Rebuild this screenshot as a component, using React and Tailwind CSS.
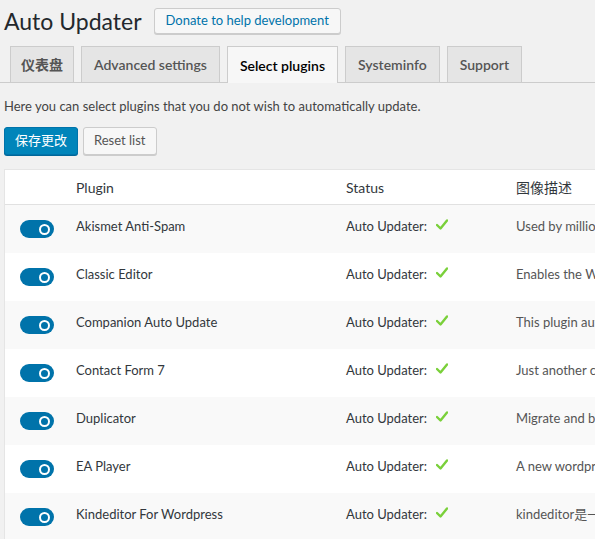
import React from 'react';

const font = { fontFamily: 'Lato, "Noto Sans CJK SC", sans-serif' };

const plugins = [
  ['Akismet Anti-Spam', 'Used by millions, Akismet is quite possibly the best way in the world to protect your blog from spam.'],
  ['Classic Editor', 'Enables the WordPress classic editor and the old-style Edit Post screen.'],
  ['Companion Auto Update', 'This plugin auto updates all plugins, all themes and the wordpress core.'],
  ['Contact Form 7', 'Just another contact form plugin. Simple but flexible.'],
  ['Duplicator', 'Migrate and backup a copy of your WordPress files and database.'],
  ['EA Player', 'A new wordpress music player plugin.'],
  ['Kindeditor For Wordpress', 'kindeditor是一款国产在线HTML编辑器。'],
];

const tabs = ['仪表盘', 'Advanced settings', 'Select plugins', 'Systeminfo', 'Support'];

const Toggle = () => (
  <div className="w-[34px] h-[18px] rounded-full bg-[#0073aa] flex items-center justify-end pr-[4px]">
    <div className="w-[11px] h-[11px] rounded-full border-2 border-white" />
  </div>
);

const Check = () => (
  <svg width="12" height="11" viewBox="0 0 12 11" className="ml-[9px]">
    <path d="M1 6 L4.5 9.5 L11 1.5" fill="none" stroke="#7ad03a" strokeWidth="2.4" strokeLinecap="round" strokeLinejoin="round" />
  </svg>
);

const App = () => {
  return (
    <div className="w-[595px] h-[539px] overflow-hidden bg-[#f1f1f1] text-[#32373c]" style={font}>
      <div className="flex items-center pl-[4px] pt-[7px] h-[34px]">
        <h1 className="text-[23px] leading-[26px] text-[#23282d] font-normal">Auto Updater</h1>
        <button className="ml-[12px] h-[26px] px-[11px] text-[13px] text-[#0073aa] bg-[#f7f7f7] border border-[#cccccc] rounded-[3px] shadow-[0_1px_0_#cccccc]">
          Donate to help development
        </button>
      </div>

      <div className="mt-[12px] flex items-end border-b border-[#cccccc] h-[37px] pl-[10px] gap-[7px] whitespace-nowrap">
        {tabs.map((t, i) => {
          const active = t === 'Select plugins';
          const pad = i === 0 ? 'px-[10px]' : 'px-[12px]';
          return (
            <div
              key={t}
              className={
                active
                  ? `h-[37px] ${pad} flex items-center text-[14px] font-semibold text-black bg-[#f7f7f7] border border-b-0 border-[#cccccc] -mb-px`
                  : `h-[36px] ${pad} flex items-center text-[14px] font-semibold text-[#555555] bg-[#e5e5e5] border border-b-0 border-[#cccccc]`
              }
            >
              {t}
            </div>
          );
        })}
      </div>

      <p className="pl-[4px] mt-[14px] text-[13px] leading-[18px] text-[#444444]">
        Here you can select plugins that you do not wish to automatically update.
      </p>

      <div className="flex gap-[5px] pl-[4px] mt-[12px]">
        <button className="h-[28px] px-[10px] text-[13px] text-white bg-[#0085ba] border border-[#0073aa] rounded-[3px] shadow-[0_1px_0_#006799]">
          保存更改
        </button>
        <button className="h-[28px] px-[10px] text-[13px] text-[#555555] bg-[#f7f7f7] border border-[#cccccc] rounded-[3px] shadow-[0_1px_0_#cccccc]">
          Reset list
        </button>
      </div>

      <div className="ml-[4px] mt-[14px] w-[900px] bg-white border border-[#e5e5e5] whitespace-nowrap">
        <div className="flex h-[35px] items-center border-b border-[#e1e1e1] text-[14px] text-[#32373c]">
          <div className="w-[71px] shrink-0" />
          <div className="w-[270px] shrink-0">Plugin</div>
          <div className="w-[170px] shrink-0">Status</div>
          <div>图像描述</div>
        </div>
        {plugins.map(([name, desc], i) => (
          <div key={name} className={`flex h-[48px] pt-[12px] text-[13px] ${i % 2 === 0 ? 'bg-[#f9f9f9]' : 'bg-white'}`}>
            <div className="w-[71px] shrink-0 pl-[15px] pt-[3px]">
              <Toggle />
            </div>
            <div className="w-[270px] shrink-0 leading-[18px]">{name}</div>
            <div className="w-[170px] shrink-0 flex items-start leading-[18px]">
              <span>Auto Updater:</span>
              <span className="pt-[2px]"><Check /></span>
            </div>
            <div className="leading-[18px] text-[#555555]">{desc}</div>
          </div>
        ))}
      </div>
    </div>
  );
};

export default App;
